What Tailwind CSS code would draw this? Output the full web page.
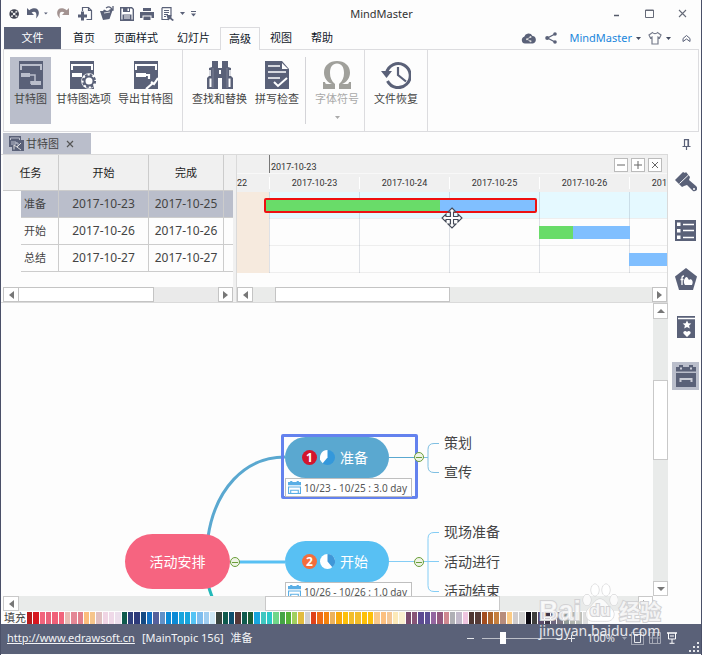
<!DOCTYPE html>
<html lang="zh-CN">
<head>
<meta charset="utf-8">
<title>MindMaster</title>
<script src="https://cdn.jsdelivr.net/npm/@tailwindcss/browser@4"></script>
</head>
<body class="bg-white font-['Noto_Sans','Noto_Sans_CJK_SC',sans-serif] text-[11px] leading-4 text-gray-900">
<div class="relative flex min-h-screen flex-col border-x border-[#4a5068] bg-[#fdfdfd]">

  <!-- Title bar -->
  <header class="flex h-[27px] shrink-0 items-center text-[#5a6178]">
    <div class="flex w-[195px] shrink-0 items-center pl-2">
      <svg class="mr-2 size-[14px]" viewBox="0 0 14 14"><circle cx="7" cy="7" r="6.5" fill="#3f4250"/><circle cx="7" cy="7" r="1.8" fill="#fff"/><g fill="#ddd"><circle cx="4" cy="4" r="1.4"/><circle cx="10" cy="4" r="1.4"/><circle cx="4" cy="10" r="1.4"/><circle cx="10" cy="10" r="1.4"/></g><path d="M4 4l6 6M10 4l-6 6" stroke="#ddd" stroke-width=".7"/></svg>
      <button aria-label="撤销" class="mr-1"><svg class="size-[13px]" viewBox="0 0 13 13"><path d="M0 1v7h7L4.600 5.600C8 3.600 10.500 5.500 9 11.500 14 7 12 .5 6.500 1.300 5 1.500 3.500 2.200 2.300 3.300Z" fill="currentColor"/></svg></button>
      <svg class="mr-2 h-[3px] w-[5px]" viewBox="0 0 5 3"><path d="M0 0h5L2.500 3z" fill="currentColor"/></svg>
      <button aria-label="恢复" class="mr-[9px] text-[#a39391]"><svg class="size-[13px]" viewBox="0 0 13 13"><path d="M13 1v7H6l2.400-2.400C5 3.600 2.500 5.500 4 11.500-1 7 1 .5 6.500 1.300 8 1.500 9.500 2.200 10.700 3.300Z" fill="currentColor"/></svg></button>
      <button aria-label="新建" class="mr-[6px]"><svg class="size-[15px]" viewBox="0 0 15 15"><path d="M4.500 5V1.500h6l3 3v9h-5M10.500 1.500v3h3" fill="none" stroke="currentColor" stroke-width="1.200"/><path d="M3 5.500h3v3h3v3H6v3H3v-3H0v-3h3z" fill="currentColor"/></svg></button>
      <button aria-label="打开" class="mr-[6px]"><svg class="size-[15px]" viewBox="0 0 15 15"><path d="M1 5h3l1-1.500L8 5l6-2-3.500 10L4 14z" fill="currentColor"/><path d="M7 2c3-2 5-1 6 1.500M14 0v4h-3.500" fill="none" stroke="currentColor" stroke-width="1.300"/><path d="M5 7l6-1" stroke="#fff" stroke-width=".8"/></svg></button>
      <button aria-label="保存" class="mr-[6px]"><svg class="size-[14px]" viewBox="0 0 14 14"><path d="M.7.7h11l1.600 1.600v11H.7z" fill="#fff" stroke="currentColor" stroke-width="1.400"/><path d="M3 1h7v4H3z" fill="currentColor"/><path d="M2.500 7.500h9V13h-9z" fill="currentColor"/><path d="M4 9h6M4 11h6" stroke="#fff"/><path d="M7.500 1.500h1.500v2.500H7.500z" fill="#fff"/></svg></button>
      <button aria-label="打印" class="mr-[7px]"><svg class="size-[14px]" viewBox="0 0 14 14"><path d="M3 1h8v3H3zM0 5h14v6h-2.500V8.500h-9V11H0zM3.500 9.500h7V13h-7z" fill="currentColor"/></svg></button>
      <button aria-label="导出" class="mr-[6px]"><svg class="h-[14px] w-[13px]" viewBox="0 0 13 14"><path d="M1 .7h9v8M7 12.500H1V.7" fill="none" stroke="currentColor" stroke-width="1.200"/><path d="M3 3.500h5M3 5.500h5M3 7.500h4M3 9.500h2" stroke="currentColor"/><path d="M5.500 8h5v3l2.500 2-1.500 1-2.500-2-2 1.500z" fill="currentColor"/></svg></button>
      <svg class="mr-[6px] h-[3px] w-[5px] shrink-0" viewBox="0 0 5 3"><path d="M0 0h5L2.500 3z" fill="currentColor"/></svg>
      <svg class="h-[6px] w-[5px] shrink-0" viewBox="0 0 5 6"><path d="M0 0h5v1H0zM0 2.500h5L2.500 5.500z" fill="currentColor"/></svg>
    </div>
    <h1 class="flex-1 text-center text-[11px] text-[#333]">MindMaster</h1>
    <div class="flex w-[134px] shrink-0 items-center justify-end gap-6 pr-[14px]">
      <button aria-label="最小化"><svg class="size-[9px]" viewBox="0 0 9 9"><path d="M2 6.500h5" stroke="#555b6b" stroke-width="1.500"/></svg></button>
      <button aria-label="最大化"><svg class="size-[9px]" viewBox="0 0 9 9"><path d="M.5 1h8v7.500h-8zM.5 1.500h8" fill="none" stroke="#666b78"/></svg></button>
      <button aria-label="关闭"><svg class="size-[9px]" viewBox="0 0 9 9"><path d="M1 1l7 7M8 1L1 8" stroke="#666b78" stroke-width="1.100"/></svg></button>
    </div>
  </header>

  <!-- Ribbon tabs -->
  <nav class="relative z-10 flex h-[22px] shrink-0 items-stretch gap-px pl-[3px]">
    <button class="w-[57px] bg-[#5a6178] text-white">文件</button>
    <button class="ml-[2px] px-[9px]">首页</button>
    <button class="px-[9px]">页面样式</button>
    <button class="px-[9px]">幻灯片</button>
    <button class="-mb-px border border-b-0 border-[#dcdcdf] bg-[#fdfdfd] px-2">高级</button>
    <button class="px-[9px]">视图</button>
    <button class="px-[9px]">帮助</button>
    <div class="ml-auto flex items-center pr-[10px] text-[#5a6178]">
      <svg class="mr-[9px] h-[11px] w-[15px]" viewBox="0 0 15 11"><path d="M4 10.500a3.500 3.500 0 0 1-.8-6.800A4.500 4.500 0 0 1 11.500 3a3.800 3.800 0 0 1 .3 7.500z" fill="currentColor"/><path d="M9.500 4L6 6.200l3.500 2" fill="none" stroke="#ddd" stroke-width=".8"/><circle cx="9.500" cy="4" r="1" fill="#ddd"/><circle cx="6" cy="6.200" r="1" fill="#ddd"/><circle cx="9.500" cy="8.200" r="1" fill="#ddd"/></svg>
      <button aria-label="分享" class="mr-3"><svg class="size-3" viewBox="0 0 12 12"><path d="M10 2L2.500 6 10 10" fill="none" stroke="currentColor" stroke-width="1.300"/><circle cx="10" cy="2" r="1.800" fill="currentColor"/><circle cx="2.200" cy="6" r="2" fill="currentColor"/><circle cx="10" cy="10" r="1.800" fill="currentColor"/></svg></button>
      <button class="flex items-center gap-1 text-[#1a86dc]">MindMaster<svg class="h-[3px] w-[5px] text-[#444b60]" viewBox="0 0 5 3"><path d="M0 0h5L2.500 3z" fill="currentColor"/></svg></button>
      <button aria-label="皮肤" class="ml-[7px] flex items-center gap-1"><svg class="size-[14px]" viewBox="0 0 14 14"><path d="M4.500 1.500C5.500 3 8.500 3 9.500 1.500L13 4l-1.500 3L10 6v7H4V6L2.500 7 1 4z" fill="none" stroke="#777c8c" stroke-width="1.200"/></svg><svg class="h-[3px] w-[5px] text-[#444b60]" viewBox="0 0 5 3"><path d="M0 0h5L2.500 3z" fill="currentColor"/></svg></button>
      <button aria-label="折叠功能区" class="ml-[11px]"><svg class="size-[9px]" viewBox="0 0 9 9"><path d="M1 4.500L4.500 1.500 8 4.500v3L4.500 5 1 7.500z" fill="none" stroke="currentColor"/></svg></button>
    </div>
  </nav>

  <!-- Ribbon -->
  <section class="mx-[2px] flex h-[83px] shrink-0 border border-[#dcdcdf] text-[#444] [&_button]:flex [&_button]:flex-col [&_button]:items-center [&_button]:gap-[2px] [&_button]:pt-1">
    <div class="flex gap-[5px] border-r border-[#dcdcdf] py-[7px] pr-[9px] pl-[6px]">
      <button class="w-[41px] bg-[#babecb]"><svg class="h-7 w-6" viewBox="0 0 24 28"><path d="M0 0h24v28H0z" fill="#5a6178"/><path d="M2 9V4h20v5" fill="none" stroke="#babecb" stroke-width="2"/><path d="M2 12h9v4H2zM12 20h10v4H12z" fill="#babecb"/><path d="M11 14h5v6M12 20v3" fill="none" stroke="#babecb" stroke-width="1.500"/></svg>甘特图</button>
      <button><svg class="h-7 w-[27px]" viewBox="0 0 27 28"><path d="M0 0h24v28H0z" fill="#5a6178"/><path d="M2 9V4h20v5" fill="none" stroke="#fff" stroke-width="2"/><path d="M2 12h10v4H2z" fill="#fff"/><circle cx="19" cy="20" r="7.800" fill="#fff"/><circle cx="19" cy="20" r="6" fill="none" stroke="#5a6178" stroke-width="2.200" stroke-dasharray="2.600 2.110"/><circle cx="19" cy="20" r="4.500" fill="#fff" stroke="#5a6178" stroke-width="2"/></svg>甘特图选项</button>
      <button class="ml-[2px]"><svg class="h-7 w-6" viewBox="0 0 24 28"><path d="M0 0h24v28H0z" fill="#5a6178"/><path d="M2 9V4h20v5" fill="none" stroke="#fff" stroke-width="2"/><path d="M2 12h10v4H2z" fill="#fff"/><path d="M12 14h3v4M17 21l3 2 4-6M19 22l-7 6" fill="none" stroke="#fff" stroke-width="2.200"/></svg>导出甘特图</button>
    </div>
    <div class="flex gap-2 border-r border-[#dcdcdf] py-[7px] pr-[5px] pl-[9px]">
      <button><svg class="h-7 w-[26px]" viewBox="0 0 26 28"><path d="M5 0h6v7h4V0h6v6l3 1v8l2 2v11H15V17h-4v11H0V17l2-2V7l3-1z" fill="#5a6178"/><path d="M3 9v6M23 9v6" stroke="#fff" stroke-width="1.500"/><path d="M2.500 17.500h2V26h-2zM21.500 17.500h2V26h-2zM12 9h2v4h-2z" fill="#fff"/><path d="M6 7v20M20 7v20" stroke="#7c8295" stroke-width="1"/></svg>查找和替换</button>
      <button><svg class="h-7 w-6" viewBox="0 0 24 28"><path d="M0 0h17l7 8v20H0z" fill="#5a6178"/><path d="M17 2v6h6" fill="#fff"/><path d="M3 5h12M3 11h18M3 17h12" stroke="#fff" stroke-width="1.700"/><path d="M9 21l4 4 9-8" fill="none" stroke="#fff" stroke-width="2"/></svg>拼写检查</button>
      <div class="-ml-[2px] flex border-l border-[#d4d4d8] pl-[9px]">
        <button disabled class="text-[#a9a9a9]"><svg class="h-7 w-[30px]" viewBox="0 0 30 28"><path d="M1 28v-7h2c.3 2 1 2 3 2h4C5 21 2 17 2 11.500 2 4.500 7.500 0 15 0s13 4.500 13 11.500c0 5.500-3 9.500-8 11.500h4c2 0 2.700 0 3-2h2v7H17v-5c3.500-3 5-6.500 5-11 0-6-2.500-9.500-7-9.500S8 6 8 12c0 4.500 1.500 8 5 11v5z" fill="#a0a09b"/></svg>字体符号<svg class="mt-[7px] h-[3px] w-[5px]" viewBox="0 0 5 3"><path d="M0 0h5L2.500 3z" fill="#aaa"/></svg></button>
      </div>
    </div>
    <div class="flex border-r border-[#dcdcdf] px-[9px] py-[7px]">
      <button><svg class="h-7 w-[30px]" viewBox="0 0 30 28"><path d="M5.500 12A12 12 0 1 1 6.500 20" fill="none" stroke="#5a6178" stroke-width="3"/><path d="M0 10h11l-5.500 7z" fill="#5a6178"/><path d="M17 6v8l8 6.500" fill="none" stroke="#5a6178" stroke-width="2.200"/></svg>文件恢复</button>
    </div>
  </section>

  <div class="flex flex-1">
    <!-- Work area -->
    <main class="flex min-w-0 flex-1 flex-col">
      <div class="flex h-[22px] shrink-0 pt-px pl-[2px]">
        <div class="flex w-[88px] items-center gap-[2px] bg-[#babecb] pl-[6px] text-[#444]">
          <svg class="size-[15px]" viewBox="0 0 15 15"><path d="M0 0h12v4h3v11H3v-4H0z" fill="#5a6178"/><path d="M1.500 4V2h9v2M2 6h5v2H2M7 7h2v3" fill="none" stroke="#babecb"/><path d="M5 13.500V9l3 2 4-4M8 11l4 3" fill="none" stroke="#ddd"/></svg>
          甘特图
          <button aria-label="关闭甘特图" class="ml-[5px]"><svg class="size-2" viewBox="0 0 8 8"><path d="M1 1l6 6M7 1L1 7" stroke="#555" stroke-width="1.200"/></svg></button>
        </div>
      </div>

      <section class="flex h-[149px] shrink-0 border-y border-[#dadada] bg-[#f0f0f0]">
        <!-- Task table -->
        <div class="flex w-[232px] shrink-0 flex-col bg-[#fdfdfd] pl-[2px]">
          <table class="w-full table-fixed border-separate border-spacing-0 text-center text-[#444]">
            <colgroup><col class="w-[18px]"><col class="w-[38px]"><col class="w-[90px]"><col class="w-[75px]"><col></colgroup>
            <thead><tr class="h-9 bg-[#f0f0f0] text-[#222] [&>th]:border-r [&>th]:border-b [&>th]:border-[#ccc] [&>th]:p-0 [&>th]:font-normal">
              <th colspan="2">任务</th><th>开始</th><th>完成</th><th class="border-r-0!"></th></tr></thead>
            <tbody class="[&_td]:p-0 [&_td:not(:first-child)]:border-b [&_td:not(:first-child)]:border-[#ccc] [&_td:nth-child(n+2):nth-child(-n+4)]:border-r [&_td:nth-child(2)]:pl-[3px] [&_td:nth-child(2)]:text-left [&_td:nth-child(n+3)]:text-[12px] [&_tr]:h-[27px]">
              <tr><td></td><td class="bg-[#babecb]">准备</td><td class="bg-[#babecb]">2017-10-23</td><td class="bg-[#babecb]">2017-10-25</td><td class="bg-[#babecb]"></td></tr>
              <tr><td></td><td>开始</td><td>2017-10-26</td><td>2017-10-26</td><td></td></tr>
              <tr><td></td><td>总结</td><td>2017-10-27</td><td>2017-10-27</td><td></td></tr>
            </tbody>
          </table>
          <div class="mt-auto flex h-[15px] bg-[#eaeaea]">
            <button aria-label="向左" class="flex w-4 items-center justify-center border border-[#c4c4c4] bg-white"><svg class="h-2 w-[5px]" viewBox="0 0 5 8"><path d="M5 0v8L0 4z" fill="#777"/></svg></button>
            <div class="-ml-px w-[136px] border border-[#c4c4c4] bg-white"></div>
            <button aria-label="向右" class="ml-auto flex w-[15px] items-center justify-center border border-[#c4c4c4] bg-white"><svg class="h-2 w-[5px]" viewBox="0 0 5 8"><path d="M0 0v8l5-4z" fill="#777"/></svg></button>
          </div>
        </div>

        <!-- Timeline -->
        <div class="ml-[3px] flex min-w-0 flex-1 flex-col overflow-hidden border-x border-[#dadada] bg-[#fdfdfd] font-[Roboto,'Noto_Sans_CJK_SC',sans-serif] text-[9px] leading-3 text-[#333]">
          <div class="flex h-[18px] shrink-0 bg-[#f0f0f0] pl-8">
            <div class="flex items-end border-l border-[#777] pl-px">2017-10-23</div>
            <div class="ml-auto flex items-center gap-[3px] pt-px pr-[5px] [&>button]:flex [&>button]:size-[14px] [&>button]:items-center [&>button]:justify-center [&>button]:border [&>button]:border-[#bbb] [&>button]:bg-white">
              <button aria-label="缩小"><svg class="size-2" viewBox="0 0 8 8"><path d="M0 4h8" stroke="#666"/></svg></button>
              <button aria-label="放大"><svg class="size-2" viewBox="0 0 8 8"><path d="M0 4h8M4 0v8" stroke="#666"/></svg></button>
              <button aria-label="关闭"><svg class="size-2" viewBox="0 0 8 8"><path d="M1 1l6 6M7 1L1 7" stroke="#666"/></svg></button>
            </div>
          </div>
          <div class="flex h-[19px] shrink-0 items-center border-t border-[#f8f8f8] bg-[#f0f0f0] text-center [&>span]:w-[90px] [&>span]:shrink-0 [&>span]:border-l [&>span]:border-white">
            <div class="w-8 shrink-0 text-left">22</div><span>2017-10-23</span><span>2017-10-24</span><span>2017-10-25</span><span>2017-10-26</span><span>2017-10-27</span>
          </div>
          <div class="relative">
            <div class="h-[27px] border-b border-[#eee] bg-[#e5f9ff]"></div>
            <div class="h-[27px] border-b border-[#eee]"></div>
            <div class="h-[27px] border-b border-[#eee]"></div>
            <div class="absolute inset-0 flex [&>i]:w-[90px] [&>i]:shrink-0 [&>i]:border-l [&>i]:border-slate-500/20">
              <div class="w-8 shrink-0 bg-[#f6eade]"></div><i></i><i></i><i></i><i></i><i></i>
            </div>
            <div class="absolute top-[6px] left-[27px] flex h-[15px] w-[273px] rounded-xs border-2 border-[#ee1111] bg-[#80bfff]"><div class="w-[174px] bg-[#69dc69]"></div></div>
            <div class="absolute top-[34px] left-[302px] flex h-[13px] w-[91px] bg-[#80bfff]"><div class="w-[34px] bg-[#69dc69]"></div></div>
            <div class="absolute top-[61px] left-[392px] h-[13px] w-[90px] bg-[#80bfff]"></div>
            <svg class="absolute top-[15px] left-[204px] size-[22px]" viewBox="0 0 22 22"><path d="M11 1l4 4h-2.500v4.500H17V7l4 4-4 4v-2.500h-4.500V17H15l-4 4-4-4h2.500v-4.500H5V15l-4-4 4-4v2.500h4.500V5H7z" fill="#fff" stroke="#444a58" stroke-width="1.100"/></svg>
          </div>
          <div class="mt-auto flex h-[15px] shrink-0 bg-[#eaebea]">
            <button aria-label="向左" class="flex w-4 items-center justify-center border border-[#c4c4c4] bg-white"><svg class="h-2 w-[5px]" viewBox="0 0 5 8"><path d="M5 0v8L0 4z" fill="#777"/></svg></button>
            <div class="ml-[22px] w-[175px] border border-[#c4c4c4] bg-white"></div>
            <button aria-label="向右" class="ml-auto flex w-[15px] items-center justify-center border border-[#c4c4c4] bg-white"><svg class="h-2 w-[5px]" viewBox="0 0 5 8"><path d="M0 0v8l5-4z" fill="#777"/></svg></button>
          </div>
        </div>
      </section>

      <!-- Mind map -->
      <section class="flex flex-1">
        <div class="relative flex-1 overflow-hidden text-[14px] leading-5 text-[#444]">
          <svg class="absolute top-0 left-0 h-full w-[500px]" fill="none">
            <path d="M207 234C214 187 243 154 284 154" stroke="#5aa8d0" stroke-width="3"/>
            <path d="M238 259h46" stroke="#58c0f3" stroke-width="3"/>
            <path d="M207 280c1 6 3 12 6 18" stroke="#23b9b9" stroke-width="3"/>
            <path d="M388 154.500h39M438 140.500h-5q-6 0-6 6v17q0 6 6 6h5" stroke="#7fbfe2"/>
            <path d="M388 154.500h26" stroke="#5aa8d0"/>
            <path d="M388 258.500h50M438 229.500h-5q-6 0-6 6v47q0 6 6 6h5" stroke="#84cdf5"/>
          </svg>
          <div class="absolute top-[231px] left-[124px] flex h-[55px] w-[105px] items-center justify-center rounded-full bg-[#f66480] text-white">活动安排</div>

          <div class="absolute top-[131px] left-[280px] h-[65px] w-[137px] rounded-xs border-3 border-[#6482ee]"></div>
          <div class="absolute top-[134px] left-[284px] flex h-[41px] w-[104px] items-center gap-[3px] rounded-full bg-[#5aa8d0] pl-[17px] text-white">
            <span class="flex size-[15px] items-center justify-center rounded-full bg-[#d3152d] text-[12px] font-bold">1</span>
            <svg class="mr-[2px] size-[15px]" viewBox="0 0 15 15"><circle cx="7.500" cy="7.500" r="7.500" fill="#3498db"/><path d="M7.500 7.500V0A7.500 7.500 0 0 0 2.700 13.300z" fill="#fff"/></svg>
            准备
          </div>
          <div class="absolute top-[175px] left-[284px] flex h-[19px] w-[127px] items-center gap-[3px] border border-[#bfbfbf] bg-white pl-[2px] text-[10px] text-[#555]">
            <svg class="size-[13px] shrink-0" viewBox="0 0 12 12"><path d="M0 1h12v3H0zM0 5h12v7H0zM2 0h2v2H2zM8 0h2v2H8z" fill="#5aaee5"/><path d="M1 6h10v5H1z" fill="#fff"/><path d="M2.500 11V8.500h7V11" fill="none" stroke="#5aaee5"/></svg>
            10/23 - 10/25 : 3.0 day
          </div>

          <div class="absolute top-[238px] left-[284px] flex h-[41px] w-[104px] items-center gap-[3px] rounded-full bg-[#58c0f3] pl-[17px] text-white">
            <span class="flex size-[15px] items-center justify-center rounded-full bg-[#f46d3c] text-[12px] font-bold">2</span>
            <svg class="mr-[2px] size-[15px]" viewBox="0 0 15 15"><circle cx="7.500" cy="7.500" r="7.500" fill="#fff"/><path d="M7.500 7.500V0A7.500 7.500 0 0 1 12.300 13.300z" fill="#3f97d8"/></svg>
            开始
          </div>
          <div class="absolute top-[279px] left-[284px] flex h-[19px] w-[127px] items-center gap-[3px] border border-[#bfbfbf] bg-white pl-[2px] text-[10px] text-[#555]">
            <svg class="size-[13px] shrink-0" viewBox="0 0 12 12"><path d="M0 1h12v3H0zM0 5h12v7H0zM2 0h2v2H2zM8 0h2v2H8z" fill="#5aaee5"/><path d="M1 6h10v5H1z" fill="#fff"/><path d="M2.500 11V8.500h7V11" fill="none" stroke="#5aaee5"/></svg>
            10/26 - 10/26 : 1.0 day
          </div>

          <button aria-label="折叠" class="absolute top-[254px] left-[229px] flex size-[10px] items-center justify-center rounded-full border border-[#6b9f3a] bg-[#eef3e6]"><span class="h-px w-[6px] bg-[#6b9f3a]"></span></button>
          <button aria-label="折叠" class="absolute top-[149px] left-[413px] flex size-[10px] items-center justify-center rounded-full border border-[#6b9f3a] bg-[#eef3e6]"><span class="h-px w-[6px] bg-[#6b9f3a]"></span></button>
          <button aria-label="折叠" class="absolute top-[254px] left-[413px] flex size-[10px] items-center justify-center rounded-full border border-[#6b9f3a] bg-[#eef3e6]"><span class="h-px w-[6px] bg-[#6b9f3a]"></span></button>

          <span class="absolute top-[130px] left-[443px]">策划</span>
          <span class="absolute top-[159px] left-[443px]">宣传</span>
          <span class="absolute top-[219px] left-[443px]">现场准备</span>
          <span class="absolute top-[249px] left-[443px]">活动进行</span>
          <span class="absolute top-[278px] left-[443px]">活动结束</span>
        </div>
        <div class="flex w-[15px] flex-col bg-[#e9ebea]">
          <button aria-label="向上" class="flex h-4 items-center justify-center border border-[#c9c9c9] bg-white"><svg class="h-1 w-2" viewBox="0 0 8 4"><path d="M0 4h8L4 0z" fill="#777"/></svg></button>
          <div class="mt-[61px] h-20 border border-[#c9c9c9] bg-white"></div>
          <button aria-label="向下" class="mt-auto flex h-[15px] items-center justify-center border border-[#c9c9c9] bg-white"><svg class="h-1 w-2" viewBox="0 0 8 4"><path d="M0 0h8L4 4z" fill="#777"/></svg></button>
        </div>
      </section>
      <div class="mr-[15px] ml-[2px] flex h-[15px] shrink-0 bg-[#e9ebea]">
        <button aria-label="向左" class="flex w-4 items-center justify-center border border-[#c9c9c9] bg-white"><svg class="h-2 w-[5px]" viewBox="0 0 5 8"><path d="M5 0v8L0 4z" fill="#777"/></svg></button>
        <div class="ml-[246px] w-[235px] border border-[#c9c9c9] bg-white"></div>
        <button aria-label="向右" class="ml-auto flex w-[15px] items-center justify-center border border-[#c9c9c9] bg-white"><svg class="h-2 w-[5px]" viewBox="0 0 5 8"><path d="M0 0v8l5-4z" fill="#777"/></svg></button>
      </div>
    </main>

    <!-- Side tools -->
    <aside class="flex w-[33px] shrink-0 flex-col items-center pt-[7px] text-[#5a6178]">
      <button aria-label="固定" class="mb-[21px] ml-1"><svg class="h-[11px] w-[9px]" viewBox="0 0 9 11"><path d="M2.500 7V.7H6.500V7M.5 7.500h8M4.500 7v4" fill="none" stroke="currentColor" stroke-width="1.200"/><path d="M5.500 1h1.500v6H5.500z" fill="currentColor"/></svg></button>
      <button aria-label="格式" class="mb-[27px] ml-[2px]"><svg class="size-[22px]" viewBox="0 0 22 22"><path d="M0 9L8 1l2 1 1-1 4 5-1 3 7 6c3 3 0 6-3 5l-6-6-3 1-2 1z" fill="currentColor"/><path d="M4.500 12.500L13.500 4" stroke="#fdfdfd"/><circle cx="19" cy="18" r="1" fill="#fff"/></svg></button>
      <button aria-label="大纲" class="mb-[27px] ml-[2px]"><svg class="size-[21px]" viewBox="0 0 21 21"><path d="M0 0h21v21H0z" fill="currentColor"/><path d="M2 2.500h3.500V6H2zM2 9h3.500v3.500H2zM2 15.500h3.500V19H2z" fill="#fff"/><path d="M8 4.500h11M8 10.500h11M8 17.500h11" stroke="#fff" stroke-width="1.500"/></svg></button>
      <button aria-label="剪贴画" class="mb-[26px] ml-[2px]"><svg class="size-[22px]" viewBox="0 0 22 22"><path d="M11 0l11 8.500L18 22H4L0 8.500z" fill="currentColor"/><path d="M10 17c-2-3-1-6 1-8 2 0 2 2 3 3 2-2 5 1 3 5z" fill="#fff"/><path d="M5.500 11.500h3M7 17V10q0-2 2-2" fill="none" stroke="#fff" stroke-width="1.300"/></svg></button>
      <button aria-label="收藏" class="mb-6 ml-[2px]"><svg class="h-[22px] w-[18px]" viewBox="0 0 18 22"><path d="M0 0h18v22H0z" fill="currentColor"/><path d="M1 2.500h17" stroke="#fff" stroke-width="1.500"/><path d="M10 4.500l1.300 2.800 3 .3-2.200 2 .7 3-2.800-1.500-2.800 1.500.7-3-2.200-2 3-.3zM10 21l-3.500-3.500c-1-2 2-3.500 3.500-1.500 1.500-2 4.500-.5 3.500 1.500z" fill="#fff"/></svg></button>
      <button aria-label="任务" class="ml-[2px] flex h-7 w-[27px] items-center justify-center bg-[#babecb]"><svg class="h-[22px] w-5" viewBox="0 0 20 22"><path d="M0 2h20v4.500H0zM0 8h20v14H0z" fill="currentColor"/><path d="M3 0h4v5H3zM13 0h4v5h-4z" fill="currentColor"/><path d="M4 2.500h2v2H4zM14 2.500h2v2h-2z" fill="#c9ccd6"/><path d="M4.500 17v-3h11v3" fill="none" stroke="#c9ccd6" stroke-width="2"/></svg></button>
    </aside>
  </div>

  <!-- Fill colours -->
  <div class="flex h-[13px] shrink-0 items-center pl-[3px] leading-3 text-[#444]">
    <span class="w-[23px] shrink-0">填充</span>
    <div id="palette" class="flex h-3 w-[561px] gap-px [&>i]:flex-1"></div>
  </div>

  <!-- Status bar -->
  <footer class="relative mb-px flex h-[30px] shrink-0 items-center bg-[#5a6178] pb-[2px] pl-[6px] text-[11px] text-gray-100">
    <a href="http://www.edrawsoft.cn" class="mr-[7px] underline">http://www.edrawsoft.cn</a>
    <span class="mr-[7px]">[MainTopic 156]</span>
    <span>准备</span>
    <div class="ml-auto flex items-center pr-6 text-gray-200">
      <button aria-label="缩小" class="mr-2"><svg class="size-[7px]" viewBox="0 0 7 7"><path d="M0 3.500h7" stroke="currentColor"/></svg></button>
      <input type="range" aria-label="缩放" min="0" max="400" value="95" class="h-3 w-20 appearance-none bg-[linear-gradient(#bcbfc8,#bcbfc8)] bg-[length:100%_1px] bg-center bg-no-repeat [&::-webkit-slider-thumb]:h-3 [&::-webkit-slider-thumb]:w-[6px] [&::-webkit-slider-thumb]:appearance-none [&::-webkit-slider-thumb]:bg-white">
      <button aria-label="放大" class="mr-3 ml-[6px]"><svg class="size-[7px]" viewBox="0 0 7 7"><path d="M0 3.500h7M3.500 0v7" stroke="currentColor"/></svg></button>
      <span class="mr-[7px]">100%</span>
      <svg class="mr-1 h-[3px] w-[5px] text-gray-400" viewBox="0 0 5 3"><path d="M0 0h5L2.500 3z" fill="currentColor"/></svg>
      <button aria-label="适应页面" class="mr-[5px]"><svg class="size-[13px]" viewBox="0 0 13 13" fill="none" stroke="currentColor"><path d="M.5.5h12v12H.5z" stroke-dasharray="1 1"/><path d="M3.500 2.500h6v8h-6z"/></svg></button>
      <button aria-label="适应宽度" class="mr-[6px]"><svg class="size-3" viewBox="0 0 12 12" fill="none" stroke="#a5a9b6"><path d="M.5.500h11v11H.5zM.5 6h11M3.500 1v10M8.500 1v10"/></svg></button>
      <button aria-label="演示"><svg class="h-3 w-[10px]" viewBox="0 0 10 12" fill="none" stroke="#fff"><path d="M0 1h10" stroke-width="1.500"/><path d="M1.500 1v6h7V1M3 4h4M5 7v4M2.500 11.300h5"/></svg></button>
    </div>
    <svg class="absolute right-[2px] bottom-[2px] size-[10px]" viewBox="0 0 10 10" fill="#e5e7eb"><path d="M8 0h2v2H8zM4 4h2v2H4zM8 4h2v2H8zM0 8h2v2H0zM4 8h2v2H4zM8 8h2v2H8z"/></svg>
  </footer>

  <!-- Watermark -->
  <div class="pointer-events-none absolute right-[36px] bottom-[16px] z-20 w-[126px] text-white/80">
    <div class="flex items-end font-bold text-white/75 [paint-order:stroke] [-webkit-text-stroke:2px_#d2d2d4]">
      <span class="font-['Liberation_Sans'] text-[27px] leading-6">Bai</span>
      <div class="relative mx-px h-10 w-9">
        <svg class="h-10 w-9" viewBox="0 0 36 40" fill="#fff" fill-opacity=".75" stroke="#d0d0d2"><ellipse cx="5" cy="17" rx="4" ry="5.500"/><ellipse cx="13" cy="7" rx="4" ry="6"/><ellipse cx="24" cy="7" rx="4" ry="6"/><ellipse cx="32" cy="17" rx="4" ry="5.500"/><path d="M18 16c4 0 6 4 9 7 5 4 6 8 4 12-2 4-7 3-13 3S7 39 5 35s-1-8 4-12c3-3 5-7 9-7z"/></svg>
        <span class="absolute inset-x-0 bottom-[2px] text-center font-['Liberation_Sans'] text-[17px] leading-5">du</span>
      </div>
      <span class="text-[21px] leading-6">经验</span>
    </div>
    <div class="text-[14px] leading-4 whitespace-nowrap text-white/85">jingyan.baidu.com</div>
  </div>
</div>
<script>
  const colours = ('b71c1c d7171f f2647c e9637a f06078 f2647c e8bdb5 e48796 e17f8c fcbd7c f6c58a e0bfc0 f0d5e4 efd9e8 ecdfec ' +
    '0f5a4d 2f3f7d 2d3a7a 134a84 1271c4 56609c 6091c8 0b8ad6 0b8ad6 17a5dd 17a5dd 55c4f5 7fbdee 9fcdf1 cfe8f5 38443f 0f5a4d ' +
    '0e4f6e 553636 0f5a4d 1b5e35 17a5dd 40c7c0 2bc8c8 6fd68a 45a545 55b335 a0cf5f e2bc3f d0d0d2 e0431a ef6c15 f5820d ecb25c ' +
    'f9a90b fdc00a f3bd2a f3bd2a fdc00a fdc00a f9c98a fcc080 f5c796 fce9b8 faf0cf 7a4b6c 875577 5b4a92 5b4f94 9466a0 93587f ' +
    'cf8890 b0b0b5 c3bacb efc5e0 4f3632 553a36 a34d1f ac632b c57f3e b78d7c fbcb85 d0cccd cfcfcf 0a0810 3f3f3d 5a4a6a 3f3648 ' +
    '6f6880 807a85 909a98 b0b4ae bcc0bc dedede').split(' ');
  document.getElementById('palette').innerHTML = colours.map(c => `<i style="background:#${c}"></i>`).join('');
</script>
</body>
</html>
